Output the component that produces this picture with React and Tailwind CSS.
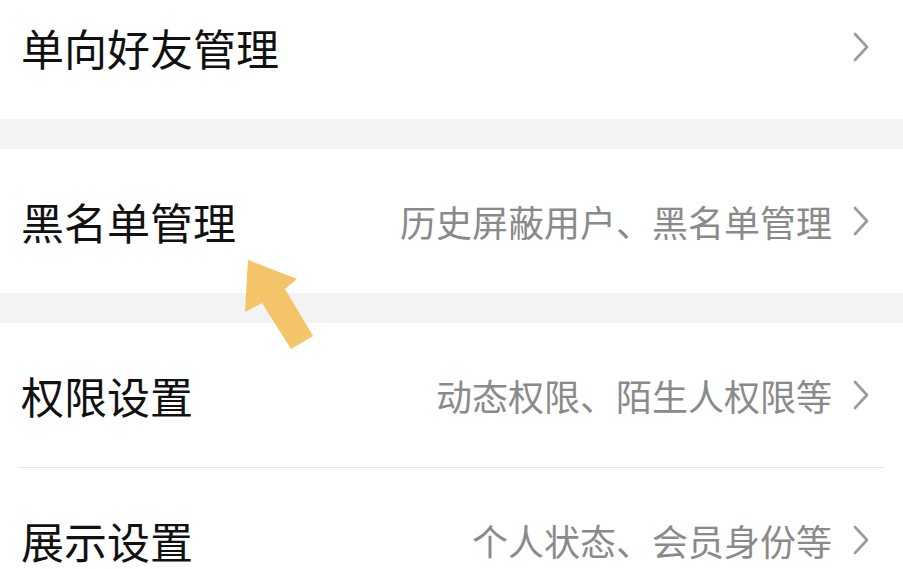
import React from 'react';

const rows = [
  { title: '单向好友管理', sub: '' },
  { title: '黑名单管理', sub: '历史屏蔽用户、黑名单管理', gapBefore: true },
  { title: '权限设置', sub: '动态权限、陌生人权限等', gapBefore: true },
  { title: '展示设置', sub: '个人状态、会员身份等', divider: true },
];

function Chevron() {
  return (
    <svg width="20" height="32" viewBox="0 0 20 32" className="shrink-0">
      <path d="M4 3 L16 16 L4 29" fill="none" stroke="#9a9a9a" strokeWidth="2.6" strokeLinecap="round" strokeLinejoin="round" />
    </svg>
  );
}

export default function App() {
  return (
    <div
      className="relative w-[903px] h-[569px] overflow-hidden bg-white"
      style={{ fontFamily: '"Noto Sans CJK SC", "Noto Sans", sans-serif' }}
    >
      <div className="-mt-[25px]">
        {rows.map((r, i) => (
          <div key={i}>
            {r.gapBefore && <div className="h-[30px] bg-[#f3f3f3]" />}
            {r.divider && <div className="mx-[18px] h-px bg-[#e6e6e6]" />}
            <div className="h-[144px] flex items-center pl-[21px] pr-[32px]">
              <span className="text-[43px] leading-none text-[#111] flex-1">{r.title}</span>
              {r.sub && (
                <span className="text-[36px] leading-none text-[#8a8a8a] mr-[19px]">{r.sub}</span>
              )}
              <Chevron />
            </div>
          </div>
        ))}
      </div>
      <svg className="absolute inset-0 pointer-events-none" width="903" height="569">
        <polygon
          points="248,260 297,279 285,289 313,336 291,349 262,303 245,312"
          fill="#f4c468"
        />
      </svg>
    </div>
  );
}
